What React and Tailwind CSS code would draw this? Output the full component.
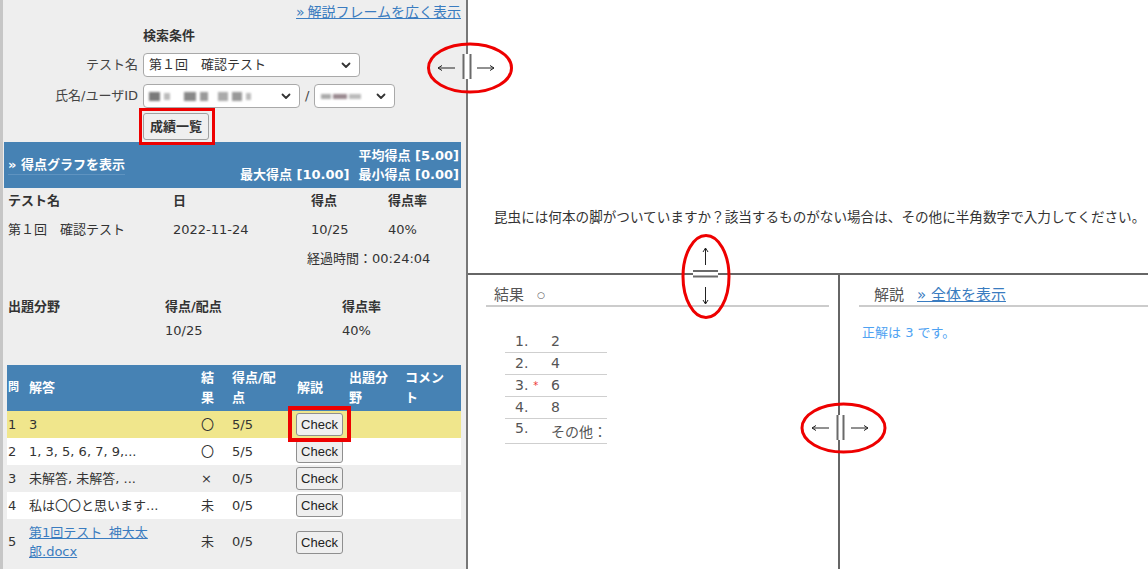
import React from 'react';

const Chevron = () => (
  <svg width="10" height="7" viewBox="0 0 10 7" className="shrink-0">
    <path d="M1.5 1.5 L5 5 L8.5 1.5" fill="none" stroke="#333" strokeWidth="1.8" strokeLinecap="round" strokeLinejoin="round" />
  </svg>
);

const rows = [
  { no: '1', ans: '3', res: '〇', score: '5/5', bg: 'bg-[#f0e68c]' },
  { no: '2', ans: '1, 3, 5, 6, 7, 9,...', res: '〇', score: '5/5', bg: 'bg-white' },
  { no: '3', ans: '未解答, 未解答, ...', res: '×', score: '0/5', bg: '' },
  { no: '4', ans: '私は〇〇と思います...', res: '未', score: '0/5', bg: 'bg-white' },
];

function CheckButton() {
  return (
    <button className="h-[23px] w-[47px] rounded-[3px] border border-[#8f8f8f] bg-[#efefef] font-['Liberation_Sans',sans-serif] text-[13px] leading-none text-[#222]">
      Check
    </button>
  );
}

function Overlay() {
  return (
    <svg className="pointer-events-none absolute inset-0" width="1148" height="569" viewBox="0 0 1148 569">
      {/* red boxes */}
      <rect x="140.5" y="109.5" width="73" height="34" fill="none" stroke="#ee0000" strokeWidth="3" />
      <rect x="290" y="408" width="59" height="32" fill="none" stroke="#ee0000" strokeWidth="4" />

      {/* splitter left/right */}
      <rect x="464" y="54" width="6" height="25" fill="#fff" />
      <path d="M463.5 54 V79 M470.5 54 V79" stroke="#6a6a6a" strokeWidth="2" />
      <path d="M438 68 H455 M438 68 l4 -2.5 M438 68 l4 2.5" stroke="#222" strokeWidth="1" fill="none" />
      <path d="M477 68 H494 M494 68 l-4 -2.5 M494 68 l-4 2.5" stroke="#222" strokeWidth="1" fill="none" />
      <ellipse cx="470" cy="68" rx="41.5" ry="24" fill="none" stroke="#ee0000" strokeWidth="3" />

      {/* splitter up/down */}
      <rect x="693" y="272" width="25" height="4" fill="#fff" />
      <path d="M693 271 H718 M693 276.5 H718" stroke="#6a6a6a" strokeWidth="2" />
      <path d="M705.5 248 V265 M705.5 248 l-2.5 4 M705.5 248 l2.5 4" stroke="#222" strokeWidth="1" fill="none" />
      <path d="M705.5 287 V304 M705.5 304 l-2.5 -4 M705.5 304 l2.5 -4" stroke="#222" strokeWidth="1" fill="none" />
      <ellipse cx="706" cy="276.5" rx="23" ry="41" fill="none" stroke="#ee0000" strokeWidth="3" />

      {/* splitter bottom */}
      <rect x="838" y="415" width="5" height="25" fill="#fff" />
      <path d="M837.5 415 V440 M843.5 415 V440" stroke="#6a6a6a" strokeWidth="2" />
      <path d="M812 428 H829 M812 428 l4 -2.5 M812 428 l4 2.5" stroke="#222" strokeWidth="1" fill="none" />
      <path d="M851 428 H868 M868 428 l-4 -2.5 M868 428 l-4 2.5" stroke="#222" strokeWidth="1" fill="none" />
      <ellipse cx="843.5" cy="428" rx="41.5" ry="24" fill="none" stroke="#ee0000" strokeWidth="3" />
    </svg>
  );
}

export default function App() {
  return (
    <div className="relative flex h-[569px] w-[1148px] overflow-hidden bg-white font-['DejaVu_Sans','Noto_Sans_CJK_JP',sans-serif] text-[#333]">
      {/* Left frame */}
      <aside className="w-[468px] shrink-0 border-l-[3px] border-r-2 border-l-[#c6c6c6] border-r-[#777] bg-[#eeeeee] text-[13px]">
        <div className="flex h-[21px] justify-end pr-[5px] pt-[3px]">
          <a className="text-[14px] leading-[18px] text-[#3a7cc0] underline">»&thinsp;解説フレームを広く表示</a>
        </div>

        <div className="ml-[140px] mt-[6px] font-bold leading-[18px]">検索条件</div>

        <div className="mt-[8px] flex items-center gap-[5px]">
          <span className="w-[135px] text-right text-[#444]">テスト名</span>
          <div className="flex h-[24px] w-[217px] items-center justify-between rounded-[4px] border border-[#a9a9a9] bg-white pl-[5px] pr-[8px]">
            <span>第１回　確認テスト</span>
            <Chevron />
          </div>
        </div>

        <div className="mt-[7px] flex items-center gap-[5px]">
          <span className="w-[135px] text-right text-[#444]">氏名/ユーザID</span>
          <div className="flex h-[24px] w-[157px] items-center justify-between rounded-[4px] border border-[#a9a9a9] bg-white pl-[5px] pr-[8px]">
            <span className="flex items-center gap-[4px] blur-[1.2px]">
              <span className="h-[9px] w-[11px] bg-[#7a7a7a]" />
              <span className="h-[7px] w-[6px] bg-[#bbb]" />
              <span className="ml-[10px] h-[9px] w-[12px] bg-[#888]" />
              <span className="h-[9px] w-[8px] bg-[#999]" />
              <span className="ml-[6px] h-[9px] w-[10px] bg-[#aaa]" />
              <span className="h-[9px] w-[10px] bg-[#999]" />
              <span className="h-[7px] w-[5px] bg-[#bbb]" />
            </span>
            <Chevron />
          </div>
          <span className="text-[#444]">/</span>
          <div className="flex h-[24px] w-[81px] items-center justify-between rounded-[4px] border border-[#a9a9a9] bg-white pl-[6px] pr-[8px]">
            <span className="flex items-center gap-[2px] blur-[1.2px]">
              <span className="h-[5px] w-[10px] bg-[#aaa]" />
              <span className="h-[5px] w-[14px] bg-[#9a8a90]" />
              <span className="h-[5px] w-[12px] bg-[#bbb]" />
            </span>
            <Chevron />
          </div>
        </div>

        <div className="ml-[140px] mt-[5px]">
          <button className="h-[27px] w-[66px] rounded-[3px] border border-[#a0a0a0] bg-[#efefef] text-[13px] font-bold text-[#333]">
            成績一覧
          </button>
        </div>

        {/* score bar */}
        <div className="ml-[1px] mr-[5px] mt-[2px] flex h-[46px] items-center justify-between bg-[#4682b4] pl-[4px] pr-[2px] font-bold text-white">
          <span className="border-b border-[#5f93c0] leading-[18px]">» 得点グラフを表示</span>
          <div className="text-right leading-[19px]">
            <div>平均得点 [5.00]</div>
            <div>最大得点 [10.00]&nbsp;&nbsp;最小得点 [0.00]</div>
          </div>
        </div>

        {/* test summary */}
        <div className="ml-[5px] mt-[4px] grid grid-cols-[165px_138px_77px_1fr] leading-[18px]">
          <span className="font-bold">テスト名</span>
          <span className="font-bold">日</span>
          <span className="font-bold">得点</span>
          <span className="font-bold">得点率</span>
          <span className="mt-[11px]">第１回　確認テスト</span>
          <span className="mt-[11px]">2022-11-24</span>
          <span className="mt-[11px]">10/25</span>
          <span className="mt-[11px]">40%</span>
        </div>
        <div className="ml-[304px] mt-[11px] leading-[18px]">経過時間：00:24:04</div>

        {/* field summary */}
        <div className="ml-[5px] mt-[30px] grid grid-cols-[157px_177px_1fr] leading-[18px]">
          <span className="font-bold">出題分野</span>
          <span className="font-bold">得点/配点</span>
          <span className="font-bold">得点率</span>
          <span />
          <span className="mt-[6px]">10/25</span>
          <span className="mt-[6px]">40%</span>
        </div>

        {/* answers table */}
        <div className="ml-[4px] mr-[5px] mt-[25px]">
          <div className="grid h-[46px] grid-cols-[21px_172px_31px_65px_52px_56px_1fr] items-center bg-[#4682b4] font-bold leading-[20px] text-white">
            <span className="pl-[1px] text-[11px]">問</span>
            <span className="pl-[1px]">解答</span>
            <span className="pl-[1px]">結<br />果</span>
            <span className="pl-[1px]">得点/配<br />点</span>
            <span className="pl-[1px]">解説</span>
            <span className="pl-[1px]">出題分<br />野</span>
            <span className="pl-[1px]">コメン<br />ト</span>
          </div>
          {rows.map((r) => (
            <div key={r.no} className={`grid h-[27px] grid-cols-[21px_172px_31px_65px_52px_56px_1fr] items-center ${r.bg}`}>
              <span className="pl-[1px]">{r.no}</span>
              <span className="pl-[1px]">{r.ans}</span>
              <span className="pl-[1px]">{r.res}</span>
              <span className="pl-[1px]">{r.score}</span>
              <span>
                <CheckButton />
              </span>
              <span />
              <span />
            </div>
          ))}
          <div className="grid h-[46px] grid-cols-[21px_172px_31px_65px_52px_56px_1fr] items-center">
            <span className="pl-[1px]">5</span>
            <span className="pl-[1px] leading-[19px]">
              <a className="text-[#3a7cc0] underline">第1回テスト&ensp;神大太<br />郎.docx</a>
            </span>
            <span className="pl-[1px]">未</span>
            <span className="pl-[1px]">0/5</span>
            <span>
              <CheckButton />
            </span>
            <span />
            <span />
          </div>
        </div>
      </aside>

      {/* Right frames */}
      <main className="flex flex-1 flex-col">
        <section className="h-[275px] shrink-0 border-b-2 border-[#666] pl-[26px] pt-[208px]">
          <p className="whitespace-nowrap text-[13.6px] leading-[18px] text-[#333]">
            昆虫には何本の脚がついていますか？該当するものがない場合は、その他に半角数字で入力してください。
          </p>
        </section>

        <div className="flex flex-1">
          <section className="w-[372px] shrink-0 border-r-2 border-[#666]">
            <div className="ml-[18px] mr-[9px] flex items-center border-b-2 border-[#cccccc] pl-[8px] pt-[10px] leading-[20px] text-[#555]">
              <span className="text-[15px]">結果</span>
              <span className="ml-[13px] text-[9px]">○</span>
            </div>
            <div className="ml-[37px] mt-[24px] w-[102px] text-[14px] text-[#555]">
              {[['1.', '2'], ['2.', '4'], ['3.', '6', true], ['4.', '8']].map(([n, v, star]) => (
                <div key={n} className="flex h-[22px] items-center border-b border-[#cfcfcf] pl-[10px]">
                  <span className="flex w-[36px] items-center">
                    {n}
                    {star && <span className="ml-[5px] text-[10px] text-[#e33]">*</span>}
                  </span>
                  <span>{v}</span>
                </div>
              ))}
              <div className="flex h-[25px] items-start border-b border-[#cfcfcf] pl-[10px]">
                <span className="w-[36px] leading-[18px]">5.</span>
                <span className="mt-[4px] leading-[18px]">その他：</span>
              </div>
            </div>
          </section>

          <section className="flex-1">
            <div className="ml-[19px] flex items-center border-b-2 border-[#cccccc] pl-[15px] pt-[10px] text-[15px] leading-[20px]">
              <span className="text-[#555]">解説</span>
              <a className="ml-[13px] text-[#3a7cc0] underline">» 全体を表示</a>
            </div>
            <p className="ml-[22px] mt-[17px] text-[13px] leading-[18px] text-[#4ea2f2]">正解は 3 です。</p>
          </section>
        </div>
      </main>

      <Overlay />
    </div>
  );
}
